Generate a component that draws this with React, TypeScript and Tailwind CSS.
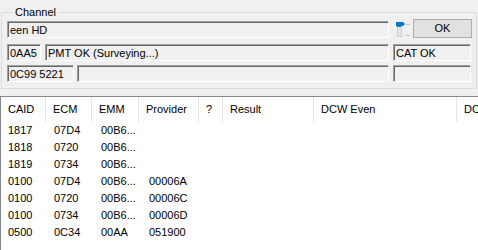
import React from 'react';

const columns = [
    { title: 'CAID', width: 'w-[45px]' },
    { title: 'ECM', width: 'w-[46px]' },
    { title: 'EMM', width: 'w-[47px]' },
    { title: 'Provider', width: 'w-[60px]' },
    { title: '?', width: 'w-[24px]' },
    { title: 'Result', width: 'w-[91px]' },
    { title: 'DCW Even', width: 'w-[143px]' },
    { title: 'DCW Odd', width: 'w-[100px]' },
];

const rows = [
    ['1817', '07D4', '00B6...', ''],
    ['1818', '0720', '00B6...', ''],
    ['1819', '0734', '00B6...', ''],
    ['0100', '07D4', '00B6...', '00006A'],
    ['0100', '0720', '00B6...', '00006C'],
    ['0100', '0734', '00B6...', '00006D'],
    ['0500', '0C34', '00AA', '051900'],
];

const Box: React.FC<{ width: string; text?: string }> = ({ width, text }) => (
    <div className={`${width} h-[17px] shrink-0 border border-t-[#a0a0a0] border-l-[#a0a0a0] border-b-white border-r-white bg-[#f0f0f0] shadow-[inset_1px_1px_0_#696969] pl-[2px] pt-[1px] leading-[14px] whitespace-nowrap overflow-hidden`}>
        {text}
    </div>
);

const Trackbar = () => (
    <svg width="16" height="17" viewBox="0 0 16 17" className="shrink-0">
        <rect x="1.5" y="5.5" width="4" height="10" fill="#e6e6e6" stroke="#d0d0d0" />
        <path d="M0 1 H7 L9 3 L7 5 H5 V6 H1 V5 H0 Z" fill="#0078d7" />
        <line x1="10" y1="3.5" x2="14" y2="3.5" stroke="#c8c8c8" />
        <line x1="10" y1="14.5" x2="14" y2="14.5" stroke="#c8c8c8" />
    </svg>
);

export default function App() {
    return (
        <div className="w-[478px] h-[250px] overflow-hidden bg-[#f0f0f0] font-['Liberation_Sans',Arial,sans-serif] text-[11px] text-black">
            <div className="pt-[5px] pl-[1px]">
                <fieldset className="w-[476px] border border-[#dcdcdc] pl-[5px] pt-[1px] pb-[6px]">
                    <legend className="ml-[6px] px-[2px] leading-[14px]">Channel</legend>
                    <div className="flex items-center">
                        <Box width="w-[382px]" text="een HD" />
                        <div className="ml-[7px] mt-[1px]">
                            <Trackbar />
                        </div>
                        <button className="ml-[1px] w-[59px] h-[19px] -mt-[1px] border border-[#adadad] bg-[#e1e1e1] leading-[17px] text-center">OK</button>
                    </div>
                    <div className="flex mt-[6px]">
                        <Box width="w-[34px]" text="0AA5" />
                        <div className="ml-[4px]">
                            <Box width="w-[344px]" text="PMT OK (Surveying...)" />
                        </div>
                        <div className="ml-[4px]">
                            <Box width="w-[78px]" text="CAT OK" />
                        </div>
                    </div>
                    <div className="flex mt-[4px]">
                        <Box width="w-[67px]" text="0C99 5221" />
                        <div className="ml-[3px]">
                            <Box width="w-[312px]" />
                        </div>
                        <div className="ml-[4px]">
                            <Box width="w-[78px]" />
                        </div>
                    </div>
                </fieldset>
            </div>
            <div className="mt-[7px] h-[200px] w-[520px] border-t border-l border-[#828790] bg-white">
                <div className="flex h-[25px]">
                    {columns.map(col => (
                        <div key={col.title} className={`${col.width} shrink-0 border-r border-[#e5e5e5] pl-[7px] leading-[25px] whitespace-nowrap overflow-hidden`}>
                            {col.title}
                        </div>
                    ))}
                </div>
                {rows.map((row, i) => (
                    <div key={i} className="flex h-[17px] leading-[17px]">
                        {row.map((cell, j) => (
                            <div key={j} className={`${columns[j].width} shrink-0 pl-[7px] whitespace-nowrap ${j === 0 ? '' : 'ml-[1px]'}`}>
                                {cell}
                            </div>
                        ))}
                    </div>
                ))}
            </div>
        </div>
    );
}
